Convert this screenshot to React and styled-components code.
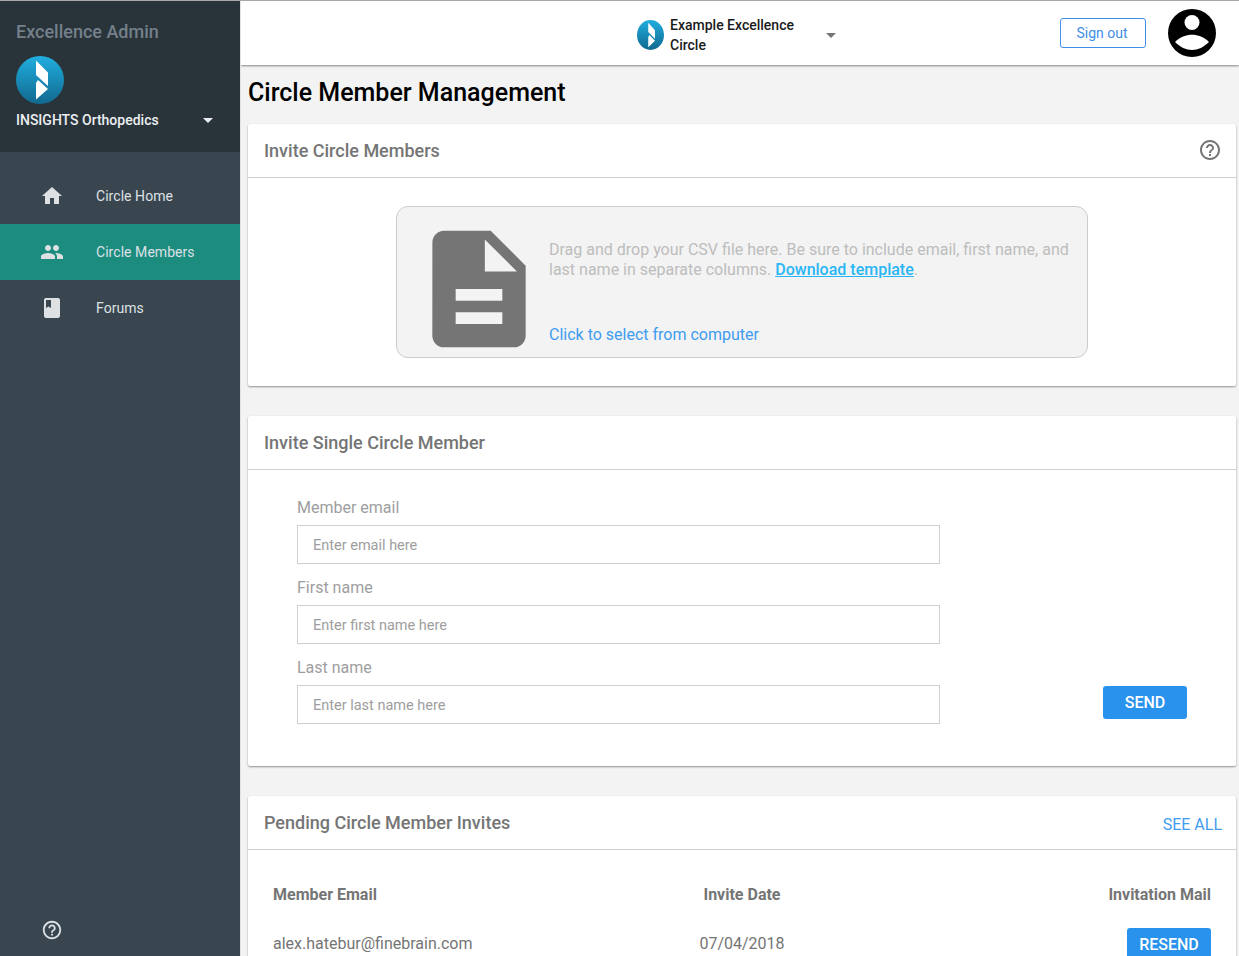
import React from 'react'
import styled, {createGlobalStyle} from 'styled-components'

const GlobalStyle = createGlobalStyle`
  html, body {
    margin: 0;
    padding: 0;
    height: 956px;
    overflow: hidden;
    background: #f3f3f3;
    font-family: Roboto, "Liberation Sans", sans-serif;
  }
  * {
    box-sizing: border-box;
  }
`

const paths = {
    home: 'M10 20v-6h4v6h5v-8h3L12 3 2 12h3v8z',
    people: 'M16 11c1.66 0 2.99-1.34 2.99-3S17.66 5 16 5c-1.66 0-3 1.34-3 3s1.34 3 3 3zm-8 0c1.66 0 2.99-1.34 2.99-3S9.66 5 8 5C6.34 5 5 6.34 5 8s1.34 3 3 3zm0 2c-2.33 0-7 1.17-7 3.5V19h14v-2.5c0-2.33-4.67-3.5-7-3.5zm8 0c-.29 0-.62.02-.97.05 1.16.84 1.97 1.97 1.97 3.45V19h6v-2.5c0-2.33-4.67-3.5-7-3.5z',
    book: 'M18 2H6c-1.1 0-2 .9-2 2v16c0 1.1.9 2 2 2h12c1.1 0 2-.9 2-2V4c0-1.1-.9-2-2-2zM6 4h5v8l-2.5-1.5L6 12V4z',
    help: 'M11 18h2v-2h-2v2zm1-16C6.48 2 2 6.48 2 12s4.48 10 10 10 10-4.48 10-10S17.52 2 12 2zm0 18c-4.41 0-8-3.59-8-8s3.59-8 8-8 8 3.59 8 8-3.59 8-8 8zm0-14c-2.21 0-4 1.79-4 4h2c0-1.1.9-2 2-2s2 .9 2 2c0 2-3 1.75-3 5h2c0-2.25 3-2.5 3-5 0-2.21-1.79-4-4-4z',
    file: 'M14 2H6c-1.1 0-1.99.9-1.99 2L4 20c0 1.1.89 2 1.99 2H18c1.1 0 2-.9 2-2V8l-6-6zm2 16H8v-2h8v2zm0-4H8v-2h8v2zm-3-5V3.5L18.5 9H13z',
}

function Icon({name, size, color}) {
    return (
        <svg width={size} height={size} viewBox="0 0 24 24" fill={color} style={{display: 'block', flex: 'none'}}>
            <path d={paths[name]} />
        </svg>
    )
}

function Logo({id, width, height}) {
    return (
        <svg width={width} height={height} viewBox="0 0 48 48" preserveAspectRatio="none" style={{display: 'block', flex: 'none'}}>
            <defs>
                <linearGradient id={id} x1="0" y1="0" x2="0" y2="1">
                    <stop offset="0" stopColor="#20aee0" />
                    <stop offset="1" stopColor="#11698f" />
                </linearGradient>
            </defs>
            <circle cx="24" cy="24" r="24" fill={`url(#${id})`} />
            <path d="M20 4.5 L32 16.5 V30 L20 19 Z M22 24 L32 33 L20 43.5 V27 Z" fill="#fff" />
        </svg>
    )
}

const Page = styled.div`
  display: grid;
  grid-template-columns: 240px 1fr;
  height: 956px;
  border-top: 1px solid #a8a8a8;
  overflow: hidden;
`

const Sidebar = styled.aside`
  display: flex;
  flex-direction: column;
  background: #39464f;
  height: 955px;
`

const SideHead = styled.div`
  height: 151px;
  background: #29333a;
  padding: 19px 16px 0;
`

const Brand = styled.div`
  font-size: 18px;
  font-weight: 500;
  line-height: 24px;
  color: #74808a;
  margin-bottom: 12px;
`

const OrgRow = styled.div`
  display: flex;
  align-items: center;
  justify-content: space-between;
  margin-top: 4px;
  height: 24px;
  padding-right: 11px;
  font-size: 14px;
  font-weight: 500;
  color: #eceff1;
`

const Caret = styled.span`
  flex: none;
  width: 0;
  height: 0;
  border-left: 5px solid transparent;
  border-right: 5px solid transparent;
  border-top: 5px solid ${props => props.color};
`

const TopCaret = styled(Caret)`
  margin-top: 4px;
`

const Nav = styled.nav`
  padding-top: 16px;
  flex: 1;
`

const NavItem = styled.a`
  display: flex;
  align-items: center;
  height: 56px;
  padding-left: 40px;
  gap: 32px;
  font-size: 14px;
  letter-spacing: 0.05px;
  color: #dde1e4;
  background: ${props => (props.$active ? '#1c8c7f' : 'transparent')};
`

const SideFoot = styled.div`
  padding: 0 0 15px 41px;
`

const Main = styled.main`
  display: flex;
  flex-direction: column;
  min-width: 0;
  overflow: hidden;
  border-left: 1px solid #e2e2e2;
`

const Topbar = styled.header`
  flex: none;
  display: flex;
  align-items: center;
  height: 64px;
  background: #fff;
  box-shadow: 0 1px 2px rgba(0, 0, 0, 0.45);
  padding-left: 396px;
  position: relative;
`

const TopLogo = styled.div`
  margin-top: 4px;
`

const CircleName = styled.div`
  width: 156px;
  margin-left: 6px;
  padding-top: 4px;
  font-size: 14px;
  font-weight: 500;
  line-height: 20px;
  color: #1b1b1b;
`

const SignOut = styled.button`
  margin-left: 224px;
  width: 86px;
  height: 30px;
  background: #fff;
  border: 1px solid #3f8ee8;
  border-radius: 3px;
  color: #3f8ee8;
  font: 400 14px Roboto, sans-serif;
  padding: 0 2px 0 0;
`

const Avatar = styled.div`
  margin-left: 22px;
`

const Content = styled.div`
  padding: 0 3px 0 7px;
`

const Title = styled.h1`
  margin: 0;
  height: 59px;
  padding-top: 12px;
  font-size: 25px;
  line-height: 32px;
  font-weight: 500;
  color: #000;
`

const Card = styled.section`
  background: #fff;
  border-radius: 2px;
  margin-bottom: 30px;
  box-shadow: 0 1px 2px rgba(0, 0, 0, 0.4);
`

const CardHead = styled.div`
  display: flex;
  align-items: center;
  justify-content: space-between;
  height: 54px;
  padding: 0 14px 1px 16px;
  border-bottom: 1px solid #d0d0d0;
`

const CardTitle = styled.h2`
  margin: 0;
  font-size: 18px;
  font-weight: 500;
  color: #757575;
`

const DropWrap = styled.div`
  display: flex;
  justify-content: center;
  padding: 28px 0;
`

const DropZone = styled.div`
  display: flex;
  align-items: flex-start;
  width: 692px;
  height: 152px;
  padding: 12px 0 0 12px;
  background: #f3f3f3;
  border: 1px solid #cbcbcb;
  border-radius: 12px;
`

const DropText = styled.div`
  display: flex;
  flex-direction: column;
  justify-content: space-between;
  height: 105px;
  margin-top: 21px;
  padding-right: 16px;
  font-size: 16px;
  line-height: 20px;
  color: #bdbdbd;
`

const TemplateLink = styled.a`
  font-weight: 500;
  color: #29b6f6;
  text-decoration: underline;
`

const SelectLink = styled.a`
  color: #3f9cf0;
`

const FormBody = styled.div`
  position: relative;
  height: 296px;
  padding: 28px 0 0 49px;
`

const Field = styled.label`
  display: block;
  width: 643px;
  height: 80px;
  font-size: 16px;
  line-height: 20px;
  color: #9e9e9e;
`

const Input = styled.input`
  display: block;
  width: 100%;
  height: 39px;
  margin-top: 7px;
  padding: 2px 15px 0;
  border: 1px solid #cfcfcf;
  background: #fff;
  font: 400 14.5px Roboto, sans-serif;
  &::placeholder {
    color: #9e9e9e;
    opacity: 1;
  }
`

const BlueButton = styled.button`
  width: 84px;
  height: 33px;
  background: #2892ed;
  color: #fff;
  border: none;
  border-radius: 3px;
  font: 500 16px Roboto, sans-serif;
  padding: 0;
`

const SendButton = styled(BlueButton)`
  position: absolute;
  right: 49px;
  bottom: 47px;
`

const SeeAll = styled.a`
  font-size: 16px;
  color: #3f9cf0;
  margin-top: 4px;
`

const Table = styled.div`
  display: grid;
  grid-template-columns: 1fr auto 1fr;
  align-items: center;
  padding: 35px 25px 0;
  row-gap: 23px;
  font-size: 16px;
  color: #757575;
`

const HeadCell = styled.div`
  font-weight: 700;
  line-height: 20px;
  text-align: ${props => props.$align || 'left'};
`

const Cell = styled.div`
  line-height: 20px;
  padding-bottom: 2px;
  text-align: ${props => props.$align || 'left'};
`

const ButtonCell = styled.div`
  text-align: right;
`

export default function App() {
    return (
        <>
            <GlobalStyle />
            <Page>
                <Sidebar>
                    <SideHead>
                        <Brand>Excellence Admin</Brand>
                        <Logo id="sideLogo" width={48} height={48} />
                        <OrgRow>INSIGHTS Orthopedics <Caret color="#eceff1" /></OrgRow>
                    </SideHead>
                    <Nav>
                        <NavItem><Icon name="home" size={24} color="#dde1e4" />Circle Home</NavItem>
                        <NavItem $active><Icon name="people" size={24} color="#dde1e4" />Circle Members</NavItem>
                        <NavItem><Icon name="book" size={24} color="#dde1e4" />Forums</NavItem>
                    </Nav>
                    <SideFoot><Icon name="help" size={22} color="#dde1e4" /></SideFoot>
                </Sidebar>
                <Main>
                    <Topbar>
                        <TopLogo><Logo id="topLogo" width={27} height={30} /></TopLogo>
                        <CircleName>Example Excellence Circle</CircleName>
                        <TopCaret color="#757575" />
                        <SignOut>Sign out</SignOut>
                        <Avatar>
                            <svg width="48" height="48" viewBox="0 0 48 48" style={{display: 'block'}}>
                                <circle cx="24" cy="24" r="24" fill="#000" />
                                <circle cx="24" cy="13.5" r="7.5" fill="#fff" />
                                <path d="M7 33 C12 28 18 25.7 24 25.7 C30 25.7 36 28 41 33 C36 38 30 41 24 41 C18 41 12 38 7 33 Z" fill="#fff" />
                            </svg>
                        </Avatar>
                    </Topbar>
                    <Content>
                        <Title>Circle Member Management</Title>
                        <Card>
                            <CardHead>
                                <CardTitle>Invite Circle Members</CardTitle>
                                <Icon name="help" size={24} color="#757575" />
                            </CardHead>
                            <DropWrap>
                                <DropZone>
                                    <Icon name="file" size={140} color="#757575" />
                                    <DropText>
                                        <div>Drag and drop your CSV file here. Be sure to include email, first name, and last name in separate columns. <TemplateLink>Download template</TemplateLink>.</div>
                                        <SelectLink>Click to select from computer</SelectLink>
                                    </DropText>
                                </DropZone>
                            </DropWrap>
                        </Card>
                        <Card>
                            <CardHead>
                                <CardTitle>Invite Single Circle Member</CardTitle>
                            </CardHead>
                            <FormBody>
                                <Field>Member email<Input placeholder="Enter email here" /></Field>
                                <Field>First name<Input placeholder="Enter first name here" /></Field>
                                <Field>Last name<Input placeholder="Enter last name here" /></Field>
                                <SendButton>SEND</SendButton>
                            </FormBody>
                        </Card>
                        <Card>
                            <CardHead>
                                <CardTitle>Pending Circle Member Invites</CardTitle>
                                <SeeAll>SEE ALL</SeeAll>
                            </CardHead>
                            <Table>
                                <HeadCell>Member Email</HeadCell>
                                <HeadCell $align="center">Invite Date</HeadCell>
                                <HeadCell $align="right">Invitation Mail</HeadCell>
                                <Cell>alex.hatebur@finebrain.com</Cell>
                                <Cell $align="center">07/04/2018</Cell>
                                <ButtonCell><BlueButton>RESEND</BlueButton></ButtonCell>
                            </Table>
                        </Card>
                    </Content>
                </Main>
            </Page>
        </>
    )
}
